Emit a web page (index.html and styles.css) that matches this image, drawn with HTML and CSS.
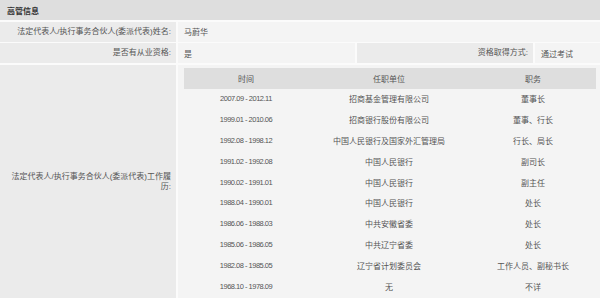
FILE: index.html
```html
<!DOCTYPE html>
<html lang="zh-CN">
<head>
<meta charset="utf-8">
<link rel="stylesheet" href="styles.css">
</head>
<body>
<div class="panel">
  <div class="title">高管信息</div>
  <div class="label">法定代表人/执行事务合伙人(委派代表)姓名:</div>
  <div class="value span3">马蔚华</div>
  <div class="label">是否有从业资格:</div>
  <div class="value">是</div>
  <div class="label">资格取得方式:</div>
  <div class="value">通过考试</div>
  <div class="label tall">法定代表人/执行事务合伙人(委派代表)工作履历:</div>
  <div class="value span3 nested">
    <table class="resume">
      <colgroup><col class="c1"><col class="c2"><col class="c3"></colgroup>
      <thead><tr><th>时间</th><th>任职单位</th><th>职务</th></tr></thead>
      <tbody>
        <tr><td class="date">2007.09 - 2012.11</td><td>招商基金管理有限公司</td><td>董事长</td></tr>
        <tr><td class="date">1999.01 - 2010.06</td><td>招商银行股份有限公司</td><td>董事、行长</td></tr>
        <tr><td class="date">1992.08 - 1998.12</td><td>中国人民银行及国家外汇管理局</td><td>行长、局长</td></tr>
        <tr><td class="date">1991.02 - 1992.08</td><td>中国人民银行</td><td>副司长</td></tr>
        <tr><td class="date">1990.02 - 1991.01</td><td>中国人民银行</td><td>副主任</td></tr>
        <tr><td class="date">1988.04 - 1990.01</td><td>中国人民银行</td><td>处长</td></tr>
        <tr><td class="date">1986.06 - 1988.03</td><td>中共安徽省委</td><td>处长</td></tr>
        <tr><td class="date">1985.06 - 1986.05</td><td>中共辽宁省委</td><td>处长</td></tr>
        <tr><td class="date">1982.08 - 1985.05</td><td>辽宁省计划委员会</td><td>工作人员、副秘书长</td></tr>
        <tr><td class="date">1968.10 - 1978.09</td><td>无</td><td>不详</td></tr>
      </tbody>
    </table>
  </div>
</div>
</body>
</html>
```

FILE: styles.css
```css
html, body {
  margin: 0;
  padding: 0;
  background: #ffffff;
}
body {
  font-family: "Liberation Sans", "Noto Sans CJK SC", sans-serif;
  font-size: 8px;
  color: #555;
  overflow: hidden;
}
.panel {
  display: grid;
  grid-template-columns: 176px 177px 176px 1fr;
  grid-auto-rows: 20px;
  gap: 2px;
  row-gap: 1.5px;
  width: 600px;
  height: 298px;
  background: #fbfbfb;
}
.title {
  grid-column: 1 / -1;
  background: #dedede;
  font-weight: bold;
  color: #333;
  padding-left: 7px;
  display: flex;
  align-items: center;
}
.label {
  background: #ebebeb;
  text-align: right;
  padding: 0 5px 0 11px;
  display: flex;
  align-items: center;
  justify-content: flex-end;
  line-height: 10px;
}
.value {
  background: #f4f4f4;
  padding-left: 6px;
  display: flex;
  align-items: center;
}
.span3 {
  grid-column: 2 / -1;
}
.tall {
  height: 234px;
}
.nested {
  height: 240px;
  align-items: flex-start;
  padding-top: 3px;
  padding-right: 4px;
}
.resume {
  width: 412px;
  border-collapse: collapse;
  table-layout: fixed;
}
.resume .c1 { width: 124px; }
.resume .c2 { width: 162px; }
.resume .c3 { width: 126px; }
.resume th {
  background: #dedede;
  font-weight: normal;
  height: 21px;
  padding: 0;
  text-align: center;
  color: #555;
}
.resume td {
  height: 20.8px;
  padding: 0;
  text-align: center;
}
.resume td.date {
  font-size: 7.5px;
  letter-spacing: -0.5px;
}
```
